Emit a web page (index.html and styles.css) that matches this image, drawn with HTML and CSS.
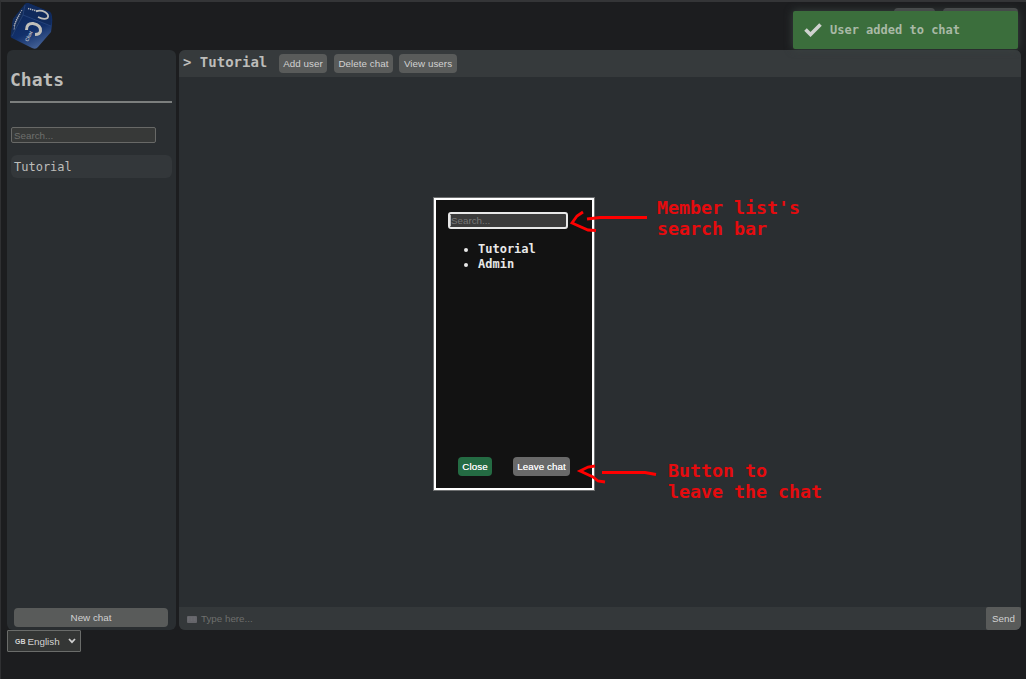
FILE: index.html
```
<!DOCTYPE html>
<html lang="en">
<head>
<meta charset="utf-8">
<title>Chat</title>
<link rel="stylesheet" href="styles.css">
</head>
<body>
<div class="app">
  <header class="top">
    <svg class="logo" viewBox="0 0 44 47" width="44" height="47">
      <defs><linearGradient id="face" x1="0.3" y1="0" x2="0.7" y2="1"><stop offset="0" stop-color="#0b2558"/><stop offset=".6" stop-color="#12306a"/><stop offset="1" stop-color="#49669b"/></linearGradient></defs>
      <path d="M15 1Q16 0 18 0L40 9Q43 11 42 22L41 29L28 44Q26 47 22 45L2 35Q0 34 1 31L3 16Z" fill="url(#face)"/>
      <path d="M15 1L3 16L1 33Q7 28 13 13Z" fill="#132c59"/>
      <path d="M15 1Q16 0 18 0L40 9Q42 12 41 23L13 12Z" fill="#102a5c"/>
      <path d="M13 12L41 23M15 2L13 12L2 33" fill="none" stroke="#2c4a82" stroke-width=".7"/>
      <path d="M16.500 27Q16.500 20 23 20.500Q31 22 30.500 28Q30 31.500 25 31.500" fill="none" stroke="#c0bfba" stroke-width="3"/>
      <path d="M26 8.500Q30 6.500 35 9Q39.500 12 37.500 15Q34 17 28 14" fill="none" stroke="#c0bfba" stroke-width="1.800"/>
      <path d="M18 5.500L27 8" fill="none" stroke="#b5b7bc" stroke-width="1.500" stroke-dasharray="1.3 .8"/>
      <path d="M12 7L7 15L4 23M10 11L5 21L4 27" fill="none" stroke="#b5b7bc" stroke-width="1" stroke-dasharray="1.3 .8"/>
      <text class="logo-word" transform="translate(18 39) rotate(-65)">Chat</text>
    </svg>
    <div class="top-actions"><span class="top-btn"></span><span class="top-btn wide"></span></div>
  </header>
  <main class="main">
    <aside class="sidebar">
      <h1 class="side-title">Chats</h1>
      <div class="field side-search">Search...</div>
      <div class="chat-item">Tutorial</div>
      <button class="btn new-chat">New chat</button>
    </aside>
    <section class="chat">
      <div class="chat-head">
        <h2 class="chat-title">&gt; Tutorial</h2>
        <button class="btn add">Add user</button>
        <button class="btn delete">Delete chat</button>
        <button class="btn view">View users</button>
      </div>
      <div class="messages"></div>
      <div class="composer">
        <svg class="keyboard" width="10" height="7" viewBox="0 0 10 7"><rect width="10" height="7" rx="1" fill="#65656a"/><path d="M1 2H9M1 4H9" stroke="#717176" stroke-dasharray="1 .5"/></svg>
        <span class="hint">Type here...</span>
        <button class="send">Send</button>
      </div>
    </section>
  </main>
  <div class="lang"><span class="flag">GB</span><span>English</span>
    <svg class="chev" width="8" height="6" viewBox="0 0 8 6"><path d="M1 1L4 4.2L7 1" fill="none" stroke="#d0d0d0" stroke-width="1.7"/></svg>
  </div>
</div>
<div class="toast">
  <svg width="18" height="14" viewBox="0 0 18 14"><path d="M1.5 6.5L6.5 11.5L16.5 1.5" fill="none" stroke="#cfd2cf" stroke-width="3.6"/></svg>
  <span>User added to chat</span>
</div>
<div class="dialog">
  <div class="field member-search"><span class="caret"></span>Search...</div>
  <ul class="members"><li>Tutorial</li><li>Admin</li></ul>
  <div class="dialog-actions"><button class="btn close">Close</button><button class="btn leave">Leave chat</button></div>
</div>
<svg class="arrows" width="1026" height="679" viewBox="0 0 1026 679">
  <path d="M583 212L577 216L572 223L588 230L596 230.500M587 219L600 217.500H647"/>
  <path d="M595 466L588 467L580 471L593 477L598 481L605 482M602 472.500H645L656 474.500"/>
</svg>
<div class="note note-search">Member list's<br>search bar</div>
<div class="note note-leave">Button to<br>leave the chat</div>
</body>
</html>
```
FILE: styles.css
```
* { box-sizing: border-box; }
body {
  margin: 0;
  height: 679px;
  overflow: hidden;
  background: #1c1d1f;
  border-top: 2px solid #343537;
  border-left: 1px solid #2f3032;
  font-family: "DejaVu Sans Mono", monospace;
  color: #bdbdba;
}
.app { display: flex; flex-direction: column; padding: 0 5px 0 6px; }
.top { display: flex; justify-content: space-between; height: 48px; }
.logo { margin: 1px 0 0 3px; }
.logo-word { font: bold 5px "Liberation Sans", sans-serif; fill: #b9bbc0; }
.top-actions { display: flex; gap: 8px; padding: 6px 3px 0 0; }
.top-btn { width: 41px; height: 18px; border-radius: 4px; background: #4f5051; }
.top-btn.wide { width: 75px; }
.main { display: flex; gap: 3px; height: 580px; }
.sidebar {
  display: flex;
  flex-direction: column;
  width: 169px;
  padding: 0 4px;
  border-radius: 6px;
  background: #2a2e31;
}
.side-title {
  height: 53px;
  margin: 0 0 0 -1px;
  padding-top: 18px;
  border-bottom: 2px solid #7c7f7e;
  font-size: 18px;
  line-height: 24px;
}
.field {
  border: 1px solid #686967;
  border-radius: 2px;
  background: #373938;
  font-family: "Liberation Sans", sans-serif;
  font-size: 9.8px;
  color: #6e6f6d;
}
.side-search { width: 145px; height: 16px; margin-top: 24px; padding-left: 2px; line-height: 15px; }
.chat-item {
  height: 23px;
  margin-top: 12px;
  padding-left: 3px;
  border-radius: 6px;
  background: #33373a;
  font-size: 12px;
  line-height: 25px;
}
.btn {
  height: 19px;
  padding: 0;
  border: 0;
  border-radius: 4px;
  background: #595b5a;
  font: 9.8px/19px "Liberation Sans", sans-serif;
  color: #d2d2d2;
}
.new-chat { width: 154px; margin: auto 0 3px 3px; }
.chat { display: flex; flex-direction: column; flex: 1; border-radius: 6px; overflow: hidden; background: #2a2e31; }
.chat-head { display: flex; align-items: flex-start; height: 27px; padding-left: 4px; background: #363a3c; }
.chat-title { width: 96px; margin: 0; font-size: 14px; line-height: 25px; }
.chat-head .btn { margin-top: 4px; letter-spacing: .05px; }
.add { width: 48px; }
.chat-head .delete { width: 59px; margin-left: 7px; }
.chat-head .view { width: 58px; margin-left: 6px; }
.messages { flex: 1; }
.composer { display: flex; align-items: center; height: 23px; background: #34383a; font: 9.8px "Liberation Sans", sans-serif; }
.keyboard { margin: 2px 4px 0 8px; }
.hint { flex: 1; color: #6e6f6d; }
.send { width: 35px; height: 23px; padding: 0; border: 0; border-radius: 2px; background: #595b5a; font: inherit; color: #d2d2d2; }
.lang {
  display: flex;
  align-items: center;
  width: 74px;
  height: 22px;
  padding: 0 4px 0 7px;
  border: 1px solid #6a6c6a;
  border-radius: 1px;
  background: #343635;
  font: 9.8px "Liberation Sans", sans-serif;
  color: #d4d4d4;
}
.flag { margin-right: 2px; padding-top: 1px; font-size: 7px; font-weight: bold; }
.chev { margin-left: auto; }
.toast {
  position: absolute;
  left: 793px;
  top: 11px;
  display: flex;
  align-items: center;
  gap: 8px;
  width: 225px;
  height: 38px;
  padding-left: 11px;
  border-radius: 2px;
  background: #3b6e3c;
  box-shadow: 0 0 9px #3b4442;
  font-size: 12px;
  font-weight: bold;
  color: #a9b9a6;
}
.dialog {
  position: absolute;
  left: 433px;
  top: 197px;
  display: flex;
  flex-direction: column;
  width: 162px;
  height: 294px;
  padding: 12px;
  border: 1px solid #6d6f70;
  box-shadow: inset 0 0 0 2px #fff;
  background: #121212;
  color: #e8e8e8;
}
.member-search {
  display: flex;
  width: 120px;
  height: 17px;
  margin: 2px 0 0 2px;
  padding-left: 0;
  border: 2px solid #e8e8e8;
  border-radius: 3px;
  background: #3b3b3b;
  line-height: 14px;
  color: #777;
}
.caret { width: 1px; height: 11px; margin-top: 1px; background: #bbb; }
.members { margin: 13px 0 0; padding-left: 32px; font-size: 12px; font-weight: bold; line-height: 15px; }
.dialog-actions { display: flex; gap: 21px; margin: auto 0 2px 12px; }
.dialog .btn { color: #f5f5f5; text-shadow: 0 0 .5px #f5f5f5; letter-spacing: .05px; }
.dialog .close { width: 34px; background: #246b43; }
.dialog .leave { width: 57px; background: #696969; }
.arrows { position: absolute; left: 0; top: 0; fill: none; stroke: #f00; stroke-width: 2.8; }
.note { position: absolute; font-size: 18.3px; font-weight: bold; line-height: 21px; color: #e50b0e; }
.note-search { left: 657px; top: 197px; }
.note-leave { left: 668px; top: 460px; }
```
